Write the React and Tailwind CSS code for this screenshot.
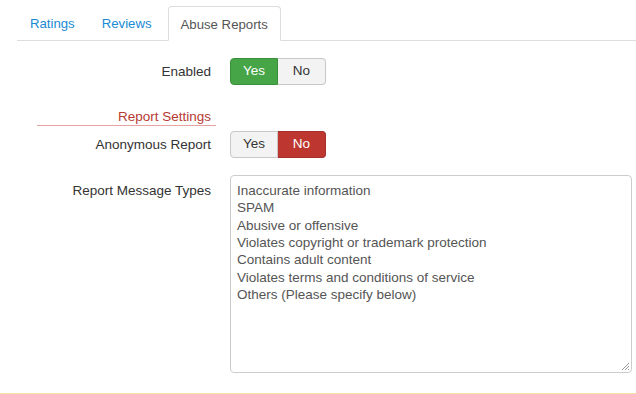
import React from "react";

function Toggle({ value }) {
  const yesActive = value === "yes";
  return (
    <div className="flex h-[27px] text-[13.5px]">
      <div
        className={
          "w-[48px] flex items-center justify-center rounded-l-[4px] border " +
          (yesActive
            ? "bg-[#46a546] border-[#3b8f3b] text-white"
            : "bg-[#f3f3f3] border-[#c8c8c8] text-[#333]")
        }
      >
        Yes
      </div>
      <div
        className={
          "w-[48px] flex items-center justify-center rounded-r-[4px] border border-l-0 " +
          (!yesActive
            ? "bg-[#bd362f] border-[#a52f29] text-white"
            : "bg-[#f3f3f3] border-[#c8c8c8] text-[#333]")
        }
      >
        No
      </div>
    </div>
  );
}

export default function App() {
  const types = [
    "Inaccurate information",
    "SPAM",
    "Abusive or offensive",
    "Violates copyright or trademark protection",
    "Contains adult content",
    "Violates terms and conditions of service",
    "Others (Please specify below)",
  ];
  return (
    <div
      className="w-[636px] h-[394px] bg-white text-[13.5px] text-[#333] overflow-hidden"
      style={{ fontFamily: '"Liberation Sans", Arial, sans-serif' }}
    >
      <div className="pt-[7px] pl-[17px] text-[13.2px]">
        <div className="flex items-end h-[34px] border-b border-[#ddd]">
          <div className="px-[13px] h-[34px] pt-[2px] flex items-center text-[#1a8ad4]">Ratings</div>
          <div className="px-[14px] h-[34px] pt-[2px] flex items-center text-[#1a8ad4]">Reviews</div>
          <div className="ml-[2px] px-[12px] h-[35px] pt-[2px] -mb-px flex items-center bg-white border border-[#ddd] border-b-white rounded-t-[4px] text-[#555]">
            Abuse Reports
          </div>
        </div>
      </div>

      <div className="mt-[17px] flex items-center">
        <div className="w-[211px] text-right pt-[1px]">Enabled</div>
        <div className="ml-[19px]">
          <Toggle value="yes" />
        </div>
      </div>

      <div className="mt-[24px] ml-[37px] w-[179px] border-b border-[#e8a3a3] text-right pr-[5px] text-[#b73a33] leading-[16px]">
        Report Settings
      </div>

      <div className="mt-[5px] flex items-center">
        <div className="w-[211px] text-right pt-[1px]">Anonymous Report</div>
        <div className="ml-[19px]">
          <Toggle value="no" />
        </div>
      </div>

      <div className="mt-[17px] flex items-start">
        <div className="w-[211px] text-right pt-[7px] leading-[17.33px]">Report Message Types</div>
        <div className="ml-[19px] relative w-[402px] h-[198px] border border-[#ccc] rounded-[4px] px-[6px] pt-[6px] text-[#555] leading-[17.33px]">
          {types.map((t) => (
            <div key={t}>{t}</div>
          ))}
          <svg className="absolute right-[1px] bottom-[1px]" width="9" height="9" viewBox="0 0 9 9">
            <path d="M8 1 L1 8 M8 4 L4 8 M8 7 L7 8" stroke="#999" strokeWidth="1" fill="none" />
          </svg>
        </div>
      </div>

      <div className="mt-[20px] h-[2px] bg-[#f1e3a6]" />
    </div>
  );
}
